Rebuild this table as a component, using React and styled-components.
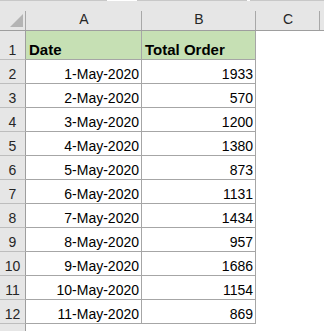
import React from "react";
import styled, { createGlobalStyle } from "styled-components";

const Global = createGlobalStyle`
  html, body { margin: 0; padding: 0; background: #ffffff; }
  body { font-family: "Liberation Sans", Arial, sans-serif; }
`;

const Sheet = styled.div`
  width: 324px;
  height: 331px;
  overflow: hidden;
  background: #ffffff;
`;

const TopStrip = styled.div`
  display: flex;
  height: 1px;
`;

const StripSeg = styled.div`
  width: ${(p) => (p.$w ? `${p.$w}px` : "auto")};
  flex: ${(p) => (p.$w ? "none" : "1")};
  background: ${(p) => (p.$gap ? "#ffffff" : "#c8c8c8")};
`;

const Row = styled.div`
  display: grid;
  grid-template-columns: 26px 116px 114px 64px 1fr;
  height: ${(p) => p.$h}px;
`;

const ColHead = styled.div`
  box-sizing: border-box;
  display: flex;
  align-items: flex-end;
  justify-content: center;
  padding-bottom: 3px;
  font-size: 14px;
  line-height: 16px;
  color: #262626;
  border-bottom: 1px solid #9e9e9e;
  background: ${(p) =>
    p.$sep
      ? "linear-gradient(#a8a8a8, #a8a8a8) right bottom / 1px 19px no-repeat, #e6e6e6"
      : "#e6e6e6"};
`;

const Corner = styled(ColHead)`
  justify-content: flex-end;
  padding-right: 3px;
  padding-bottom: 3px;
`;

const RowHead = styled.div`
  box-sizing: border-box;
  display: flex;
  align-items: flex-end;
  justify-content: center;
  padding-bottom: 1px;
  font-size: 14px;
  line-height: 16px;
  color: #262626;
  background: #e6e6e6;
  border-right: 1px solid #9e9e9e;
  border-bottom: 1px solid #bdbdbd;
`;

const Cell = styled.div`
  box-sizing: border-box;
  display: flex;
  align-items: flex-end;
  justify-content: ${(p) => (p.$right ? "flex-end" : "flex-start")};
  padding: 0 ${(p) => (p.$right ? "2px" : "0")} 1px ${(p) => (p.$right ? "0" : "3px")};
  font-size: ${(p) => (p.$bold ? "15px" : "14px")};
  font-weight: ${(p) => (p.$bold ? 700 : 400)};
  line-height: 16px;
  color: #000000;
  white-space: nowrap;
  background: ${(p) => (p.$green ? "#c6e0b4" : "#ffffff")};
  border-right: 1px solid #a6a6a6;
  border-bottom: 1px solid #a6a6a6;
`;

const Blank = styled.div`
  background: #ffffff;
`;

const data = [
  ["1-May-2020", 1933],
  ["2-May-2020", 570],
  ["3-May-2020", 1200],
  ["4-May-2020", 1380],
  ["5-May-2020", 873],
  ["6-May-2020", 1131],
  ["7-May-2020", 1434],
  ["8-May-2020", 957],
  ["9-May-2020", 1686],
  ["10-May-2020", 1154],
  ["11-May-2020", 869],
];

export default function App() {
  return (
    <>
      <Global />
      <Sheet>
        <TopStrip>
          <StripSeg $w={107} />
          <StripSeg $w={30} $gap />
          <StripSeg $w={110} />
          <StripSeg $w={3} $gap />
          <StripSeg />
        </TopStrip>
        <Row $h={30}>
          <Corner $sep>
            <svg width="13" height="13" viewBox="0 0 13 13">
              <polygon points="13,0 13,13 0,13" fill="#b4b4b4" />
            </svg>
          </Corner>
          <ColHead $sep>A</ColHead>
          <ColHead $sep>B</ColHead>
          <ColHead $sep>C</ColHead>
          <ColHead />
        </Row>
        <Row $h={29}>
          <RowHead>1</RowHead>
          <Cell $green $bold>Date</Cell>
          <Cell $green $bold>Total Order</Cell>
          <Blank />
          <Blank />
        </Row>
        {data.map(([d, n], i) => (
          <Row $h={24} key={d}>
            <RowHead>{i + 2}</RowHead>
            <Cell $right>{d}</Cell>
            <Cell $right>{n}</Cell>
            <Blank />
            <Blank />
          </Row>
        ))}
        <Row $h={20}>
          <RowHead />
          <Blank />
          <Blank />
          <Blank />
          <Blank />
        </Row>
      </Sheet>
    </>
  );
}
